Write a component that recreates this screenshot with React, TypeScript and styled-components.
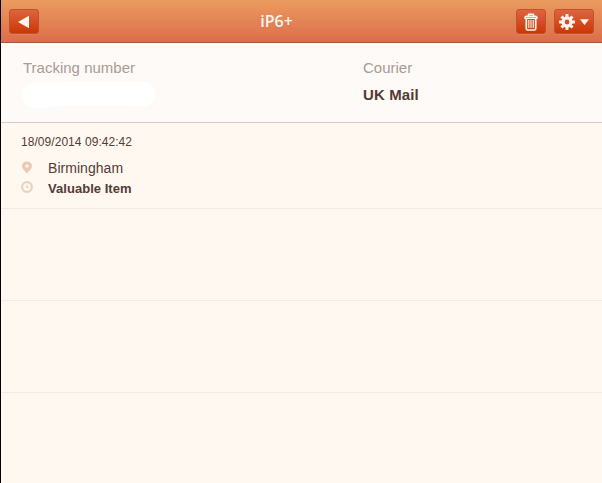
import React, { FC } from 'react';
import styled, { createGlobalStyle } from 'styled-components';

const GlobalStyle = createGlobalStyle`
  * {
    box-sizing: border-box;
  }

  body {
    margin: 0;
    background-color: #fff8f1;
    font-family: 'Liberation Sans', Arial, sans-serif;
  }
`;

const AppWrapper = styled.div`
  height: 100vh;
  display: flex;
  flex-direction: column;
  border-left: solid 1px #000;
  overflow: hidden;
`;

const Toolbar = styled.header`
  height: 43px;
  flex: none;
  display: flex;
  align-items: center;
  padding: 0 8px;
  background: linear-gradient(#eb9b5f, #dc6d4b);
  border-bottom: solid 1px #ae5738;
`;

const Title = styled.h1`
  flex: 1;
  margin: 0;
  padding: 0 2px 1px 0;
  color: #fff5ec;
  font-family: 'Open Sans', 'Noto Sans', sans-serif;
  font-size: 16px;
  font-weight: 600;
  line-height: 22px;
  text-align: center;
`;

const Actions = styled.div`
  display: flex;
  gap: 8px;
`;

const ToolbarButton = styled.button<{ $width: number }>`
  width: ${({ $width }) => $width}px;
  height: 25px;
  flex: none;
  display: flex;
  justify-content: center;
  align-items: center;
  gap: 5px;
  padding: 2px 0 0;
  border: solid 1px #c4512c;
  border-radius: 3px;
  background: linear-gradient(#dd6540, #cb3705);
  box-shadow: 0 1px 0 rgba(255, 190, 150, 0.15);
  color: #fff5ec;
`;

const Summary = styled.section`
  height: 80px;
  flex: none;
  display: grid;
  grid-template-columns: 340px 1fr;
  padding: 15px 22px 0;
  background-color: #fefaf7;
  border-bottom: solid 1px #d9cac0;
`;

const Label = styled.div`
  height: 20px;
  color: #a99a93;
  font-size: 15px;
  line-height: 20px;
`;

const Value = styled.div`
  margin-top: 7px;
  color: #523a34;
  font-size: 15px;
  font-weight: bold;
  line-height: 20px;
  letter-spacing: 0.1px;
`;

const HiddenNumber = styled.svg`
  display: block;
  margin: 3px 0 0 -2px;
`;

const EventList = styled.ul`
  flex: 1;
  margin: 0;
  padding: 0;
  list-style: none;
`;

const EventRow = styled.li<{ $height?: number }>`
  height: ${({ $height }) => $height || 92}px;
  padding: 10px 20px 0;
  border-bottom: solid 1px #f6e9df;
  color: #523c36;
`;

const EventDate = styled.div`
  margin-bottom: 7px;
  font-size: 12px;
  line-height: 18px;
  letter-spacing: 0.05px;
`;

const EventDetail = styled.div<{ $bold?: boolean }>`
  height: 20px;
  display: grid;
  grid-template-columns: 12px 1fr;
  align-items: start;
  column-gap: 15px;
  font-size: ${({ $bold }) => ($bold ? 13 : 14)}px;
  font-weight: ${({ $bold }) => ($bold ? 'bold' : 'normal')};
  line-height: ${({ $bold }) => ($bold ? 21 : 20)}px;
  letter-spacing: 0.04px;

  svg {
    margin-top: 3px;
  }
`;

const BackIcon: FC = () => (
  <svg width="12" height="14" viewBox="0 0 12 14">
    <path d="M0 7L11 0.8V13.2Z" fill="currentColor" />
  </svg>
);

const TrashIcon: FC = () => (
  <svg width="14" height="18" viewBox="0 0 14 18" fill="none" stroke="currentColor">
    <path d="M4.5 3V1.2H9.5V3" strokeWidth="1.4" />
    <path d="M1 5.2V4.6Q1 3.2 2.4 3.2H11.6Q13 3.2 13 4.6V5.2Z" strokeWidth="1.4" />
    <path d="M2.3 6V15.5Q2.3 17 3.6 17H10.4Q11.7 17 11.7 15.5V6" strokeWidth="1.7" />
    <path d="M4.8 7V15M7 7V15M9.2 7V15" strokeWidth="1.1" />
  </svg>
);

const GearIcon: FC = () => (
  <svg width="16" height="16" viewBox="-8 -8 16 16">
    <circle r="4" fill="none" stroke="currentColor" strokeWidth="3.2" />
    {[0, 45, 90, 135, 180, 225, 270, 315].map((angle) => (
      <path
        key={angle}
        d="M-1.6 -5L-1.4 -7.9H1.4L1.6 -5Z"
        fill="currentColor"
        transform={`rotate(${angle})`}
      />
    ))}
  </svg>
);

const CaretIcon: FC = () => (
  <svg width="9" height="6" viewBox="0 0 9 6">
    <path d="M0 0.2H9L4.5 6Z" fill="currentColor" />
  </svg>
);

const PinIcon: FC = () => (
  <svg width="12" height="13" viewBox="0 0 12 13">
    <path
      d="M6 0.5C3 0.5 1 2.6 1 5.2C1 8 3.8 9.6 6 12.6C8.2 9.6 11 8 11 5.2C11 2.6 9 0.5 6 0.5ZM6 3.4A1.6 1.6 0 1 1 6 6.6A1.6 1.6 0 1 1 6 3.4Z"
      fill="#e8cbb7"
      fillRule="evenodd"
    />
  </svg>
);

const ClockIcon: FC = () => (
  <svg width="12" height="12" viewBox="0 0 12 12" fill="none" stroke="#ead2c1">
    <circle cx="6" cy="6" r="4.9" strokeWidth="2.2" />
    <path d="M5.8 3.8V6.4H7.8" strokeWidth="1.2" />
  </svg>
);

const App: FC = () => {
  return (
    <AppWrapper>
      <GlobalStyle />
      <Toolbar>
        <ToolbarButton $width={30} aria-label="Back">
          <BackIcon />
        </ToolbarButton>
        <Title>iP6+</Title>
        <Actions>
          <ToolbarButton $width={30} aria-label="Delete">
            <TrashIcon />
          </ToolbarButton>
          <ToolbarButton $width={40} aria-label="Settings">
            <GearIcon />
            <CaretIcon />
          </ToolbarButton>
        </Actions>
      </Toolbar>

      <Summary>
        <div>
          <Label>Tracking number</Label>
          <HiddenNumber width="136" height="28" viewBox="0 0 136 28">
            <path
              d="M12 2C50 0 90 1 122 1C131 1 134 7 134 13C134 20 130 25 121 25C85 25 55 23 28 26C18 28 8 28 4 23C-1 16 0 4 12 2Z"
              fill="#fff"
            />
          </HiddenNumber>
        </div>
        <div>
          <Label>Courier</Label>
          <Value>UK Mail</Value>
        </div>
      </Summary>

      <EventList>
        <EventRow $height={86}>
          <EventDate>18/09/2014 09:42:42</EventDate>
          <EventDetail>
            <PinIcon />
            <span>Birmingham</span>
          </EventDetail>
          <EventDetail $bold>
            <ClockIcon />
            <span>Valuable Item</span>
          </EventDetail>
        </EventRow>
        <EventRow />
        <EventRow />
      </EventList>
    </AppWrapper>
  );
};

export default App;
